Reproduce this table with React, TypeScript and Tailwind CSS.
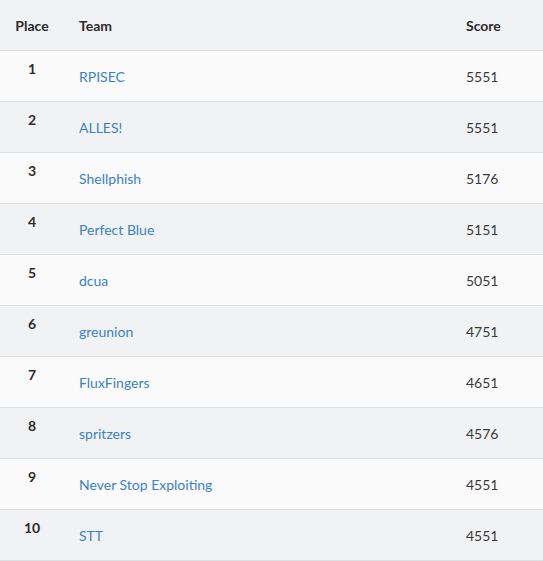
import React from "react";

const rows = [
  { place: 1, team: "RPISEC", score: 5551 },
  { place: 2, team: "ALLES!", score: 5551 },
  { place: 3, team: "Shellphish", score: 5176 },
  { place: 4, team: "Perfect Blue", score: 5151 },
  { place: 5, team: "dcua", score: 5051 },
  { place: 6, team: "greunion", score: 4751 },
  { place: 7, team: "FluxFingers", score: 4651 },
  { place: 8, team: "spritzers", score: 4576 },
  { place: 9, team: "Never Stop Exploiting", score: 4551 },
  { place: 10, team: "STT", score: 4551 },
];

export default function App() {
  return (
    <div
      className="w-[543px] bg-white text-[14px] leading-[21px] text-[#333]"
      style={{ fontFamily: "Lato, 'Noto Sans', sans-serif" }}
    >
      <div className="flex h-[51px] items-center border-b border-[#dcdee1] bg-[#f1f2f4] font-bold text-[#2c2c2c]">
        <div className="w-[64px] text-center">Place</div>
        <div className="flex-1 px-[15px]">Team</div>
        <div className="w-[92px] px-[15px]">Score</div>
      </div>
      {rows.map((r, i) => (
        <div
          key={r.place}
          className={`flex h-[51px] items-center border-b border-[#dcdee1] ${
            i % 2 === 0 ? "bg-[#fafafa]" : "bg-[#f1f2f4]"
          }`}
        >
          <div className="w-[64px] self-start pt-[7px] text-center font-bold text-[#2c2c2c]">
            {r.place}
          </div>
          <div className="flex-1 px-[15px]">
            <a className="text-[#3b82c4] no-underline" href="#">
              {r.team}
            </a>
          </div>
          <div className="w-[92px] px-[15px] text-[#3a3a3a]">{r.score}</div>
        </div>
      ))}
    </div>
  );
}
